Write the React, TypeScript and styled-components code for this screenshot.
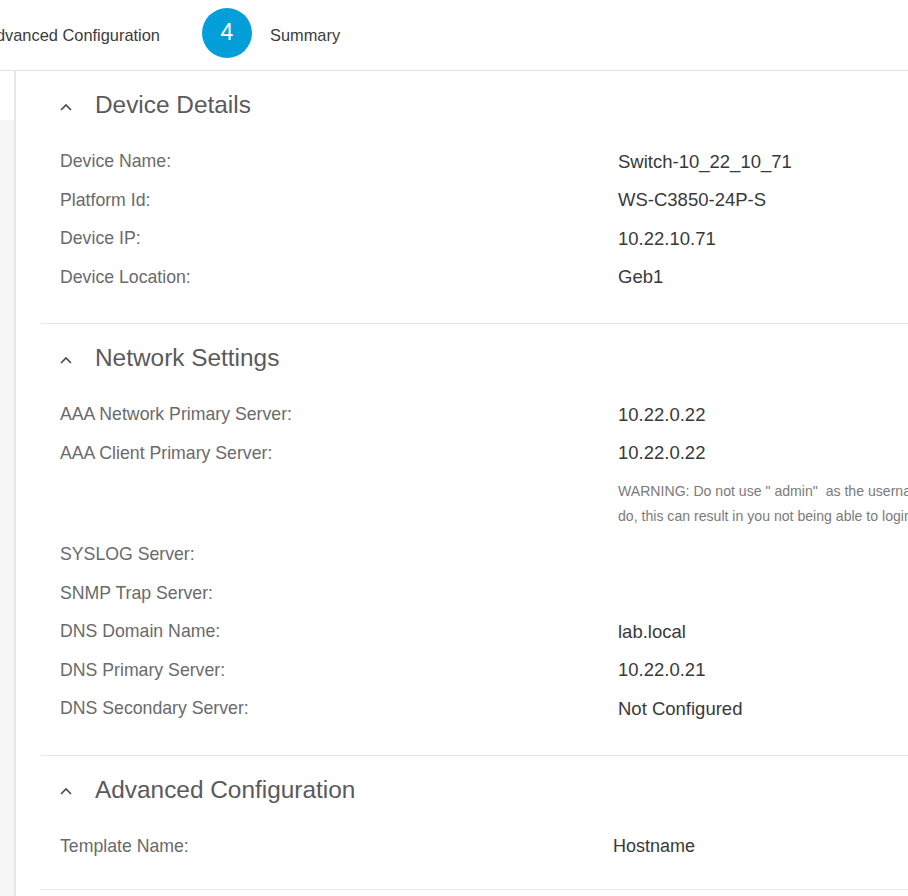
import React from "react";
import styled, { createGlobalStyle } from "styled-components";

const Global = createGlobalStyle`
  html, body { margin: 0; padding: 0; background: #ffffff; overflow: hidden; }
  body { font-family: "Liberation Sans", Arial, Helvetica, sans-serif; }
  *, *::before, *::after { box-sizing: border-box; }
`;

const Page = styled.div`
  width: 908px;
  height: 896px;
  display: flex;
  flex-direction: column;
  overflow: hidden;
`;

const StepBar = styled.header`
  flex: none;
  height: 71px;
  border-bottom: 1px solid #e2e2e2;
  display: flex;
  align-items: center;
  overflow: hidden;
`;

const StepList = styled.div`
  display: flex;
  align-items: center;
  margin-left: -15px;
  white-space: nowrap;
`;

const StepLabel = styled.span`
  font-size: 16.4px;
  color: #3b3b3b;
  margin-top: 1px;
`;

const StepCircle = styled.span`
  width: 50px;
  height: 50px;
  border-radius: 50%;
  background: #049fd9;
  color: #ffffff;
  font-size: 23px;
  display: flex;
  align-items: center;
  justify-content: center;
  margin: 0 18px 5px 42px;
`;

const Main = styled.div`
  flex: 1;
  display: flex;
  min-height: 0;
`;

const Gutter = styled.aside`
  flex: none;
  width: 16px;
  border-right: 2px solid #e8e8e8;
  background: linear-gradient(#ffffff 0 49px, #f7f7f7 49px);
`;

const Content = styled.main`
  flex: 1;
  padding-left: 25px;
  display: flex;
  flex-direction: column;
`;

const Section = styled.section<{ $padBottom: number }>`
  border-bottom: 1px solid #e6e6e6;
  padding: 19px 0 ${(p) => p.$padBottom}px;
`;

const SectionHeader = styled.h2`
  margin: 0 0 21px;
  height: 30px;
  display: flex;
  align-items: center;
  padding-left: 19px;
  font-size: 24.4px;
  font-weight: 400;
  color: #5a5a5c;
`;

const Chevron = styled.svg`
  width: 12px;
  height: 8px;
  margin: 3px 23px 0 0;
  flex: none;
`;

const Row = styled.div<{ $labelWidth: number }>`
  display: grid;
  grid-template-columns: ${(p) => p.$labelWidth}px 1fr;
  align-items: center;
  height: 38.5px;
  padding: 3px 0 0 19px;
  white-space: nowrap;
`;

const Label = styled.span`
  font-size: 17.7px;
  color: #6a6a6c;
`;

const Value = styled.span<{ $size: number }>`
  font-size: ${(p) => p.$size}px;
  color: #39393b;
`;

const NoteRow = styled.div<{ $labelWidth: number }>`
  display: grid;
  grid-template-columns: ${(p) => p.$labelWidth}px 1fr;
  padding: 8px 0 5px 19px;
`;

const Note = styled.div`
  grid-column: 2;
  font-size: 14.1px;
  line-height: 25px;
  color: #7a7a7c;
  white-space: pre;
`;

type Item = { label: string; value?: string; note?: string[] };

const sections: { title: string; labelWidth: number; valueSize: number; padBottom: number; items: Item[] }[] = [
  {
    title: "Device Details",
    labelWidth: 558,
    valueSize: 18.5,
    padBottom: 28,
    items: [
      { label: "Device Name:", value: "Switch-10_22_10_71" },
      { label: "Platform Id:", value: "WS-C3850-24P-S" },
      { label: "Device IP:", value: "10.22.10.71" },
      { label: "Device Location:", value: "Geb1" },
    ],
  },
  {
    title: "Network Settings",
    labelWidth: 558,
    valueSize: 18.5,
    padBottom: 28,
    items: [
      { label: "AAA Network Primary Server:", value: "10.22.0.22" },
      {
        label: "AAA Client Primary Server:",
        value: "10.22.0.22",
        note: [
          'WARNING: Do not use " admin"  as the username for your device CLI credentials, if you',
          "do, this can result in you not being able to login to your devices.",
        ],
      },
      { label: "SYSLOG Server:" },
      { label: "SNMP Trap Server:" },
      { label: "DNS Domain Name:", value: "lab.local" },
      { label: "DNS Primary Server:", value: "10.22.0.21" },
      { label: "DNS Secondary Server:", value: "Not Configured" },
    ],
  },
  {
    title: "Advanced Configuration",
    labelWidth: 553,
    valueSize: 18,
    padBottom: 25,
    items: [{ label: "Template Name:", value: "Hostname" }],
  },
];

export default function App() {
  return (
    <>
      <Global />
      <Page>
        <StepBar>
          <StepList>
            <StepLabel>Advanced Configuration</StepLabel>
            <StepCircle>4</StepCircle>
            <StepLabel>Summary</StepLabel>
          </StepList>
        </StepBar>
        <Main>
          <Gutter />
          <Content>
            {sections.map((s) => (
              <Section key={s.title} $padBottom={s.padBottom}>
                <SectionHeader>
                  <Chevron viewBox="0 0 12 8">
                    <polyline points="1,7 6,2 11,7" fill="none" stroke="#4a4a4a" strokeWidth="1.6" />
                  </Chevron>
                  {s.title}
                </SectionHeader>
                {s.items.map((it) => (
                  <React.Fragment key={it.label}>
                    <Row $labelWidth={s.labelWidth}>
                      <Label>{it.label}</Label>
                      {it.value && <Value $size={s.valueSize}>{it.value}</Value>}
                    </Row>
                    {it.note && (
                      <NoteRow $labelWidth={s.labelWidth}>
                        <Note>{it.note.join("\n")}</Note>
                      </NoteRow>
                    )}
                  </React.Fragment>
                ))}
              </Section>
            ))}
          </Content>
        </Main>
      </Page>
    </>
  );
}
